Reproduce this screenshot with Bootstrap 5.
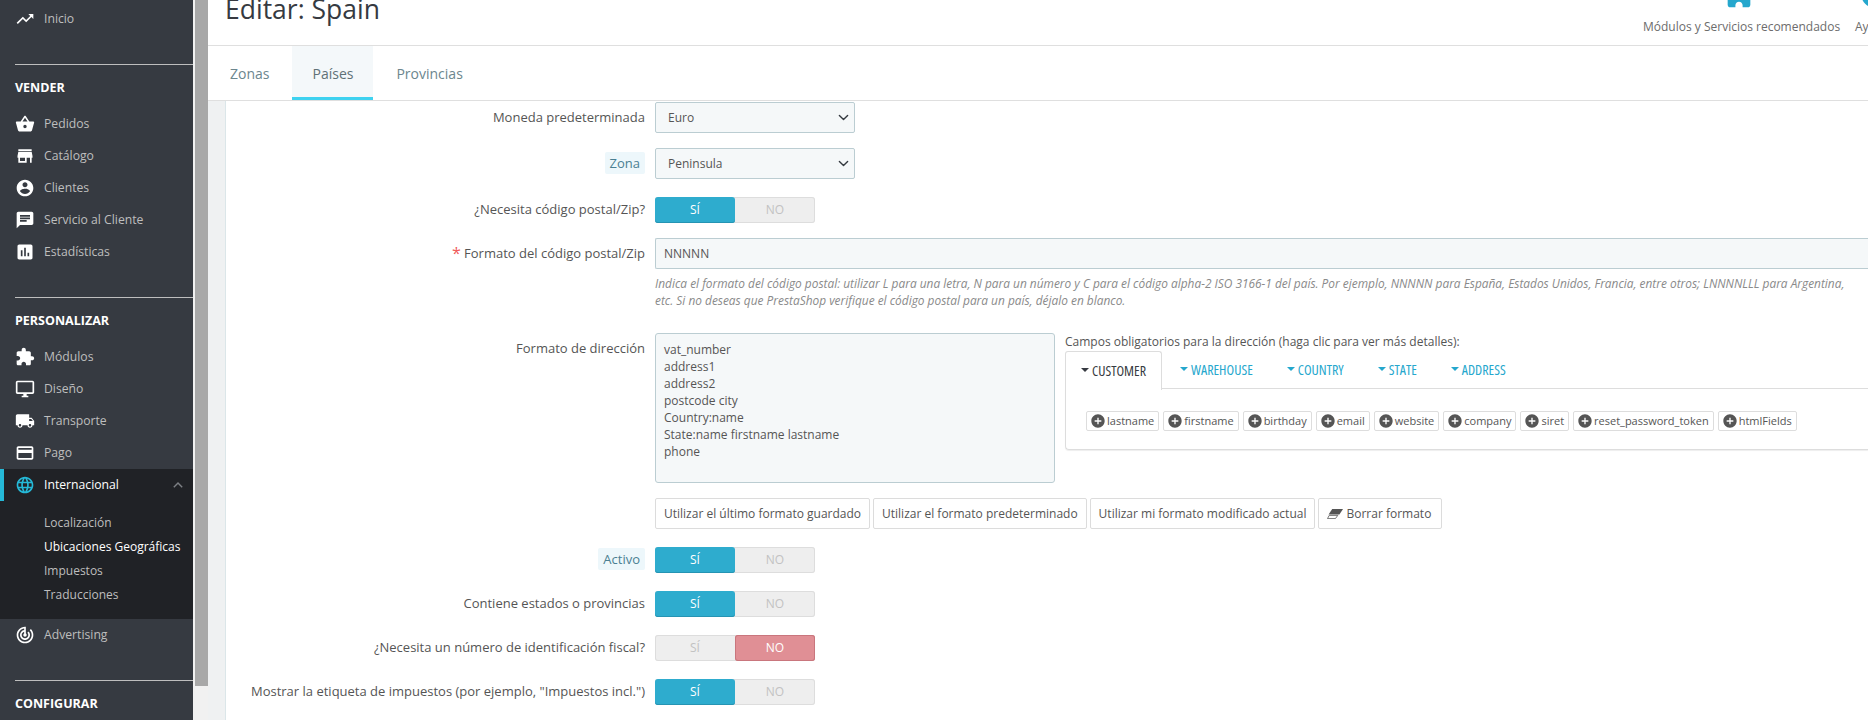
<!DOCTYPE html>
<html lang="es">
<head>
  <meta charset="UTF-8">
  <title>Editar: Spain</title>
  <link href="https://cdn.jsdelivr.net/npm/bootstrap@5.3.3/dist/css/bootstrap.min.css" rel="stylesheet">
  <style>
    html, body { height: 720px; overflow: hidden; }
    body { font-family: "Open Sans", sans-serif; font-size: 13px; color: #6c868e; background: #fff; display: flex; }

    /* sidebar */
    .menu-lateral { width: 193px; height: 720px; flex: none; background: #363a41; overflow: hidden; color: #bebebe; }
    .menu-item { height: 32px; display: flex; align-items: center; padding-left: 15px; color: #bebebe; text-decoration: none; font-size: 12.2px; }
    .menu-item svg { width: 20px; height: 20px; fill: #fff; flex: none; margin-right: 9px; }
    .menu-titulo { color: #fff; font-weight: 700; font-size: 12.5px; line-height: 17px; padding-left: 15px; margin-bottom: 12px; }
    .menu-sep { height: 1px; background: #bebebe; margin: 0 0 14px 15px; opacity: 1; }
    .menu-activo { background: #202226; height: 150px; }
    .menu-activo .menu-item { color: #fff; position: relative; }
    .menu-activo .menu-item::before { content: ""; position: absolute; left: 0; top: 0; bottom: 0; width: 4px; background: #25b9d7; }
    .menu-activo .menu-item svg { fill: #25b9d7; }
    .menu-activo .menu-item svg.menu-chevron { position: absolute; right: 10px; top: 13px; width: 10px; height: 6px; margin: 0; fill: none; }
    .sub-item { display: block; color: #bebebe; text-decoration: none; padding-left: 44px; line-height: 24px; font-size: 12px; white-space: nowrap; }
    .sub-item.sub-actual { color: #fff; }

    /* scrollbar */
    .barra-scroll { width: 15px; height: 720px; flex: none; padding-left: 2px; background: #f1f1f1; }
    .barra-pulgar { height: 686px; background: #a8a8a8; }

    /* header */
    .zona-central { flex: 1; min-width: 0; display: flex; flex-direction: column; height: 720px; }
    .cabecera { height: 46px; flex: none; border-bottom: 1px solid #dfdfdf; display: flex; justify-content: space-between; overflow: hidden; background: #fff; }
    .titulo-pagina { font-family: "Open Sans", sans-serif; font-weight: 400; font-size: 26.5px; line-height: 30px; color: #363a41; margin: -6px 0 0 17px; }
    .cab-acciones { font-size: 12px; color: #6c6c6c; flex: none; width: 226px; position: relative; }
    .cab-enlace { position: absolute; top: 18px; line-height: 17px; white-space: nowrap; }
    .cab-icono { position: absolute; fill: #25a7cd; }
    .pestanas { height: 55px; flex: none; border-bottom: 1px solid #dfdfdf; background: #fff; padding-left: 2px; gap: 3px; }
    .pestana { height: 54px; padding: 0 20px; display: flex; align-items: center; font-size: 14px; color: #6c868e; text-decoration: none; }
    .pestana-activa { background: #f4f8fa; color: #5f7177; box-shadow: inset 0 -3px 0 #3ed2f0; }

    /* form */
    .fondo-form { flex: 1; min-height: 0; background: #eff1f2; padding-left: 17px; overflow: hidden; }
    .panel-form { height: 100%; background: #fff; border-left: 1px solid #dbe6e9; padding-top: 1px; }
    .fila-form { display: flex; margin-bottom: 15px; }
    .fila-toggle { margin-bottom: 18px; }
    .etiqueta-col { width: 429px; flex: none; padding-right: 10px; text-align: right; font-size: 13px; color: #555; padding-top: 7px; line-height: 17px; white-space: nowrap; }
    .fila-toggle .etiqueta-col { padding-top: 4px; }
    .etiqueta-tip { background: #edf7fb; color: #4a7f92; padding: 2px 5px; border-radius: 2px; }
    .asterisco { color: #f05a5a; font-size: 16px; line-height: 1; vertical-align: -1px; }
    .control-col { flex: 1; min-width: 0; }
    .campo-sel, .campo-txt { height: 31px; border: 1px solid #bbcdd2; border-radius: 2px; background-color: #f5f8f9; color: #555; font-size: 12px; box-shadow: none; }
    .campo-sel { width: 200px; padding: 0 24px 0 12px; background-position: right 4px center; background-size: 13px 11px; }
    .campo-txt { width: 100%; padding: 0 8px; border-right: 0; border-radius: 2px 0 0 2px; }
    .ayuda-form { font-size: 11.9px; line-height: 17px; font-style: italic; color: #8a8a8a; margin: 6px 0 0; max-width: 1205px; }

    .interruptor { width: 160px; height: 26px; display: flex; border-radius: 3px; background: #eee; box-shadow: inset 0 0 0 1px #ddd; font-size: 12px; text-align: center; line-height: 25px; color: #c2c2c2; }
    .interruptor span { width: 80px; border-radius: 3px; }
    .int-si { background: #2eacce; color: #fff; box-shadow: inset 0 -1px 0 #2694b3; }
    .int-no { background: #e08f95; color: #fff; box-shadow: inset 0 0 0 1px #c9767d; }

    .dir-bloque { display: flex; gap: 10px; }
    .dir-texto { width: 400px; height: 150px; flex: none; border: 1px solid #bbcdd2; border-radius: 3px; background: #f5f8f9; padding: 7px 8px; font-size: 12px; line-height: 17px; color: #555; white-space: pre-line; }
    .dir-derecha { flex: 1; min-width: 0; }
    .dir-aviso { font-size: 12px; line-height: 17px; color: #555; margin-bottom: 1px; }
    .tabs-dir { display: flex; gap: 2px; height: 38px; border-bottom: 1px solid #ddd; margin: 0; padding: 0; list-style: none; }
    .tabs-dir a { display: flex; align-items: center; gap: 3px; height: 38px; padding: 0 16px 2px; color: #25a7cd; text-decoration: none; font-size: 14px; font-stretch: condensed; }
    .tabs-dir .tab-abierta a { color: #363a41; background: #fff; border: 1px solid #ddd; border-bottom: 0; border-radius: 3px 3px 0 0; height: 39px; padding: 0 15px 2px; }
    .flechita { width: 0; height: 0; border-left: 4px solid transparent; border-right: 4px solid transparent; border-top: 4px solid currentColor; }
    .panel-chips { height: 61px; border: 1px solid #ddd; border-top: 0; border-right: 0; border-radius: 0 0 0 4px; padding: 22px 0 0 20px; display: flex; gap: 4px; align-items: flex-start; box-shadow: 0 1px 1px #eee; }
    .chip { height: 20px; display: flex; align-items: center; gap: 1px; padding: 0 4px 0 3px; border: 1px solid #ddd; border-radius: 2px; font-size: 11px; color: #555; white-space: nowrap; background: #fff; }
    .chip svg { width: 16px; height: 16px; fill: #555; flex: none; }

    .botones-fmt { display: flex; gap: 3px; margin-top: 15px; }
    .boton-fmt { height: 31px; padding: 0 8px; border: 1px solid #dcdcdc; border-radius: 2px; background: #fff; font-size: 12px; color: #555; display: flex; align-items: center; gap: 3px; white-space: nowrap; }
    .boton-fmt svg { width: 16px; height: 10px; }
    .boton-borrar { padding-right: 10px; }
  </style>
</head>
<body>
  <nav class="menu-lateral">
    <div style="height:3px"></div>
    <a class="menu-item" href="#"><svg viewBox="0 0 24 24"><path d="M16 6l2.29 2.29-4.88 4.88-4-4L2 16.59 3.41 18l6-6 4 4 6.3-6.29L22 12V6z"/></svg>Inicio</a>
    <div style="height:29px"></div>
    <hr class="menu-sep">
    <div class="menu-titulo">VENDER</div>
    <a class="menu-item" href="#"><svg viewBox="0 0 24 24"><path d="M17.21 9l-4.38-6.56c-.19-.28-.51-.42-.83-.42-.32 0-.64.14-.83.43L6.79 9H2c-.55 0-1 .45-1 1 0 .09.01.18.04.27l2.54 9.27c.23.84 1 1.46 1.92 1.46h13c.92 0 1.69-.62 1.93-1.46l2.54-9.27L23 10c0-.55-.45-1-1-1h-4.79zM9 9l3-4.4L15 9H9zm3 8c-1.1 0-2-.9-2-2s.9-2 2-2 2 .9 2 2-.9 2-2 2z"/></svg>Pedidos</a>
    <a class="menu-item" href="#"><svg viewBox="0 0 24 24"><path d="M20 4H4v2h16V4zm1 10v-2l-1-5H4l-1 5v2h1v6h10v-6h4v6h2v-6h1zm-9 4H6v-4h6v4z"/></svg>Catálogo</a>
    <a class="menu-item" href="#"><svg viewBox="0 0 24 24"><path d="M12 2C6.48 2 2 6.48 2 12s4.48 10 10 10 10-4.48 10-10S17.52 2 12 2zm0 3c1.66 0 3 1.34 3 3s-1.34 3-3 3-3-1.34-3-3 1.34-3 3-3zm0 14.2c-2.5 0-4.71-1.28-6-3.22.03-1.99 4-3.08 6-3.08 1.99 0 5.97 1.09 6 3.08-1.29 1.94-3.5 3.22-6 3.22z"/></svg>Clientes</a>
    <a class="menu-item" href="#"><svg viewBox="0 0 24 24"><path d="M20 2H4c-1.1 0-1.99.9-1.99 2L2 22l4-4h14c1.1 0 2-.9 2-2V4c0-1.1-.9-2-2-2zM6 9h12v2H6V9zm8 5H6v-2h8v2zm4-6H6V6h12v2z"/></svg>Servicio al Cliente</a>
    <a class="menu-item" href="#"><svg viewBox="0 0 24 24"><path d="M19 3H5c-1.1 0-2 .9-2 2v14c0 1.1.9 2 2 2h14c1.1 0 2-.9 2-2V5c0-1.1-.9-2-2-2zM9 17H7v-7h2v7zm4 0h-2V7h2v10zm4 0h-2v-4h2v4z"/></svg>Estadísticas</a>
    <div style="height:29px"></div>
    <hr class="menu-sep">
    <div class="menu-titulo">PERSONALIZAR</div>
    <a class="menu-item" href="#"><svg viewBox="0 0 24 24"><path d="M20.5 11H19V7c0-1.1-.9-2-2-2h-4V3.5C13 2.12 11.88 1 10.5 1S8 2.12 8 3.5V5H4c-1.1 0-1.99.9-1.99 2v3.8H3.5c1.49 0 2.7 1.21 2.7 2.7s-1.21 2.7-2.7 2.7H2V20c0 1.1.9 2 2 2h3.8v-1.5c0-1.49 1.21-2.7 2.7-2.7 1.49 0 2.7 1.21 2.7 2.7V22H17c1.1 0 2-.9 2-2v-4h1.5c1.38 0 2.5-1.12 2.5-2.5S21.88 11 20.5 11z"/></svg>Módulos</a>
    <a class="menu-item" href="#"><svg viewBox="0 0 24 24"><path d="M21 2H3c-1.1 0-2 .9-2 2v12c0 1.1.9 2 2 2h7v2H8v2h8v-2h-2v-2h7c1.1 0 2-.9 2-2V4c0-1.1-.9-2-2-2zm0 14H3V4h18v12z"/></svg>Diseño</a>
    <a class="menu-item" href="#"><svg viewBox="0 0 24 24"><path d="M20 8h-3V4H3c-1.1 0-2 .9-2 2v11h2c0 1.66 1.34 3 3 3s3-1.34 3-3h6c0 1.66 1.34 3 3 3s3-1.34 3-3h2v-5l-3-4zM6 18.5c-.83 0-1.5-.67-1.5-1.5s.67-1.5 1.5-1.5 1.5.67 1.5 1.5-.67 1.5-1.5 1.5zm13.5-9l1.96 2.5H17V9.5h2.5zm-1.5 9c-.83 0-1.5-.67-1.5-1.5s.67-1.5 1.5-1.5 1.5.67 1.5 1.5-.67 1.5-1.5 1.5z"/></svg>Transporte</a>
    <a class="menu-item" href="#"><svg viewBox="0 0 24 24"><path d="M20 4H4c-1.11 0-1.99.89-1.99 2L2 18c0 1.11.89 2 2 2h16c1.11 0 2-.89 2-2V6c0-1.11-.89-2-2-2zm0 14H4v-6h16v6zm0-10H4V6h16v2z"/></svg>Pago</a>
    <div class="menu-activo">
      <a class="menu-item" href="#"><svg viewBox="0 0 24 24"><path d="M11.99 2C6.47 2 2 6.48 2 12s4.47 10 9.99 10C17.52 22 22 17.52 22 12S17.52 2 11.99 2zm6.93 6h-2.95c-.32-1.25-.78-2.45-1.38-3.56 1.84.63 3.37 1.91 4.33 3.56zM12 4.04c.83 1.2 1.48 2.53 1.91 3.96h-3.82c.43-1.43 1.08-2.76 1.91-3.96zM4.26 14C4.1 13.36 4 12.69 4 12s.1-1.36.26-2h3.38c-.08.66-.14 1.32-.14 2 0 .68.06 1.34.14 2H4.26zm.82 2h2.95c.32 1.25.78 2.45 1.38 3.56-1.84-.63-3.37-1.9-4.33-3.56zm2.95-8H5.08c.96-1.66 2.49-2.93 4.33-3.56C8.81 5.55 8.35 6.75 8.03 8zM12 19.96c-.83-1.2-1.48-2.53-1.91-3.96h3.82c-.43 1.43-1.08 2.76-1.91 3.96zM14.34 14H9.66c-.09-.66-.16-1.32-.16-2 0-.68.07-1.35.16-2h4.68c.09.65.16 1.32.16 2 0 .68-.07 1.34-.16 2zm.25 5.56c.6-1.11 1.06-2.31 1.38-3.56h2.95c-.96 1.65-2.49 2.93-4.33 3.56zM16.36 14c.08-.66.14-1.32.14-2 0-.68-.06-1.34-.14-2h3.38c.16.64.26 1.31.26 2s-.1 1.36-.26 2h-3.38z"/></svg>Internacional
        <svg class="menu-chevron" viewBox="0 0 10 6"><path d="M.8 5.2L5 1l4.2 4.2" stroke="#7d8085" stroke-width="1.4" fill="none"/></svg></a>
      <div style="height:10px"></div>
      <a class="sub-item" href="#">Localización</a>
      <a class="sub-item sub-actual" href="#">Ubicaciones Geográficas</a>
      <a class="sub-item" href="#">Impuestos</a>
      <a class="sub-item" href="#">Traducciones</a>
    </div>
    <a class="menu-item" href="#"><svg viewBox="0 0 24 24"><path d="M19.07 4.93l-1.41 1.41C19.1 7.79 20 9.79 20 12c0 4.42-3.58 8-8 8s-8-3.58-8-8c0-4.08 3.05-7.44 7-7.93v2.02C8.16 6.57 6 9.03 6 12c0 3.31 2.69 6 6 6s6-2.69 6-6c0-1.66-.67-3.16-1.76-4.24l-1.41 1.41C15.55 9.9 16 10.9 16 12c0 2.21-1.79 4-4 4s-4-1.79-4-4c0-1.86 1.28-3.41 3-3.86v2.14c-.6.35-1 .98-1 1.72 0 1.1.9 2 2 2s2-.9 2-2c0-.74-.4-1.38-1-1.72V2h-1C6.48 2 2 6.48 2 12s4.48 10 10 10 10-4.48 10-10c0-2.76-1.12-5.26-2.93-7.07z"/></svg>Advertising</a>
    <div style="height:29px"></div>
    <hr class="menu-sep">
    <div class="menu-titulo">CONFIGURAR</div>
  </nav>

  <div class="barra-scroll"><div class="barra-pulgar"></div></div>

  <div class="zona-central">
    <header class="cabecera">
      <h1 class="titulo-pagina">Editar: Spain</h1>
      <div class="cab-acciones">
        <svg class="cab-icono" style="left:83px;top:-22px;width:32px;height:32px" viewBox="0 0 24 24"><path d="M20.5 11H19V7c0-1.1-.9-2-2-2h-4V3.5C13 2.12 11.88 1 10.5 1S8 2.12 8 3.5V5H4c-1.1 0-1.99.9-1.99 2v3.8H3.5c1.49 0 2.7 1.21 2.7 2.7s-1.21 2.7-2.7 2.7H2V20c0 1.1.9 2 2 2h3.8v-1.5c0-1.49 1.21-2.7 2.7-2.7 1.49 0 2.7 1.21 2.7 2.7V22H17c1.1 0 2-.9 2-2v-4h1.5c1.38 0 2.5-1.12 2.5-2.5S21.88 11 20.5 11z"/></svg>
        <span class="cab-enlace" style="left:1px">Módulos y Servicios recomendados</span>
        <svg class="cab-icono" style="left:217px;top:-20px;width:30px;height:30px" viewBox="0 0 24 24"><circle cx="12" cy="12" r="10"/></svg>
        <span class="cab-enlace" style="left:213px">Ayuda</span>
      </div>
    </header>
    <ul class="pestanas nav">
      <li class="nav-item"><a class="pestana" href="#">Zonas</a></li>
      <li class="nav-item"><a class="pestana pestana-activa" href="#">Países</a></li>
      <li class="nav-item"><a class="pestana" href="#">Provincias</a></li>
    </ul>
    <div class="fondo-form">
      <form class="panel-form">
        <div class="fila-form">
          <div class="etiqueta-col">Moneda predeterminada</div>
          <div class="control-col"><select class="form-select campo-sel"><option>Euro</option></select></div>
        </div>
        <div class="fila-form fila-toggle">
          <div class="etiqueta-col" style="padding-top:7px"><span class="etiqueta-tip">Zona</span></div>
          <div class="control-col"><select class="form-select campo-sel"><option>Peninsula</option></select></div>
        </div>
        <div class="fila-form">
          <div class="etiqueta-col" style="padding-top:4px">¿Necesita código postal/Zip?</div>
          <div class="control-col"><div class="interruptor"><span class="int-si">SÍ</span><span>NO</span></div></div>
        </div>
        <div class="fila-form">
          <div class="etiqueta-col"><span class="asterisco">*</span> Formato del código postal/Zip</div>
          <div class="control-col">
            <input class="form-control campo-txt" value="NNNNN">
            <p class="ayuda-form">Indica el formato del código postal: utilizar L para una letra, N para un número y C para el código alpha-2 ISO 3166-1 del país. Por ejemplo, NNNNN para España, Estados Unidos, Francia, entre otros; LNNNNLLL para Argentina, etc. Si no deseas que PrestaShop verifique el código postal para un país, déjalo en blanco.</p>
          </div>
        </div>
        <div class="fila-form" style="margin-top:24px;margin-bottom:18px">
          <div class="etiqueta-col">Formato de dirección</div>
          <div class="control-col">
            <div class="dir-bloque">
              <div class="dir-texto">vat_number
address1
address2
postcode city
Country:name
State:name firstname lastname
phone</div>
              <div class="dir-derecha">
                <div class="dir-aviso">Campos obligatorios para la dirección (haga clic para ver más detalles):</div>
                <ul class="tabs-dir">
                  <li class="tab-abierta"><a href="#"><i class="flechita"></i>CUSTOMER</a></li>
                  <li><a href="#"><i class="flechita"></i>WAREHOUSE</a></li>
                  <li><a href="#"><i class="flechita"></i>COUNTRY</a></li>
                  <li><a href="#"><i class="flechita"></i>STATE</a></li>
                  <li><a href="#"><i class="flechita"></i>ADDRESS</a></li>
                </ul>
                <div class="panel-chips">
                  <span class="chip"><svg viewBox="0 0 24 24"><path d="M12 2C6.48 2 2 6.48 2 12s4.48 10 10 10 10-4.48 10-10S17.52 2 12 2zm5 11h-4v4h-2v-4H7v-2h4V7h2v4h4v2z"/></svg>lastname</span>
                  <span class="chip"><svg viewBox="0 0 24 24"><path d="M12 2C6.48 2 2 6.48 2 12s4.48 10 10 10 10-4.48 10-10S17.52 2 12 2zm5 11h-4v4h-2v-4H7v-2h4V7h2v4h4v2z"/></svg>firstname</span>
                  <span class="chip"><svg viewBox="0 0 24 24"><path d="M12 2C6.48 2 2 6.48 2 12s4.48 10 10 10 10-4.48 10-10S17.52 2 12 2zm5 11h-4v4h-2v-4H7v-2h4V7h2v4h4v2z"/></svg>birthday</span>
                  <span class="chip"><svg viewBox="0 0 24 24"><path d="M12 2C6.48 2 2 6.48 2 12s4.48 10 10 10 10-4.48 10-10S17.52 2 12 2zm5 11h-4v4h-2v-4H7v-2h4V7h2v4h4v2z"/></svg>email</span>
                  <span class="chip"><svg viewBox="0 0 24 24"><path d="M12 2C6.48 2 2 6.48 2 12s4.48 10 10 10 10-4.48 10-10S17.52 2 12 2zm5 11h-4v4h-2v-4H7v-2h4V7h2v4h4v2z"/></svg>website</span>
                  <span class="chip"><svg viewBox="0 0 24 24"><path d="M12 2C6.48 2 2 6.48 2 12s4.48 10 10 10 10-4.48 10-10S17.52 2 12 2zm5 11h-4v4h-2v-4H7v-2h4V7h2v4h4v2z"/></svg>company</span>
                  <span class="chip"><svg viewBox="0 0 24 24"><path d="M12 2C6.48 2 2 6.48 2 12s4.48 10 10 10 10-4.48 10-10S17.52 2 12 2zm5 11h-4v4h-2v-4H7v-2h4V7h2v4h4v2z"/></svg>siret</span>
                  <span class="chip"><svg viewBox="0 0 24 24"><path d="M12 2C6.48 2 2 6.48 2 12s4.48 10 10 10 10-4.48 10-10S17.52 2 12 2zm5 11h-4v4h-2v-4H7v-2h4V7h2v4h4v2z"/></svg>reset_password_token</span>
                  <span class="chip"><svg viewBox="0 0 24 24"><path d="M12 2C6.48 2 2 6.48 2 12s4.48 10 10 10 10-4.48 10-10S17.52 2 12 2zm5 11h-4v4h-2v-4H7v-2h4V7h2v4h4v2z"/></svg>htmlFields</span>
                </div>
              </div>
            </div>
            <div class="botones-fmt">
              <button type="button" class="boton-fmt">Utilizar el último formato guardado</button>
              <button type="button" class="boton-fmt">Utilizar el formato predeterminado</button>
              <button type="button" class="boton-fmt">Utilizar mi formato modificado actual</button>
              <button type="button" class="boton-fmt boton-borrar"><svg viewBox="0 0 16 10"><path d="M5.2 0H16l-3.6 5.6H1.6z" fill="#555"/><path d="M2.2 6.4h8.6L8.4 9.6H.5z" fill="#fff" stroke="#555" stroke-width=".8"/></svg>Borrar formato</button>
            </div>
          </div>
        </div>
        <div class="fila-form fila-toggle">
          <div class="etiqueta-col"><span class="etiqueta-tip">Activo</span></div>
          <div class="control-col"><div class="interruptor"><span class="int-si">SÍ</span><span>NO</span></div></div>
        </div>
        <div class="fila-form fila-toggle">
          <div class="etiqueta-col">Contiene estados o provincias</div>
          <div class="control-col"><div class="interruptor"><span class="int-si">SÍ</span><span>NO</span></div></div>
        </div>
        <div class="fila-form fila-toggle">
          <div class="etiqueta-col">¿Necesita un número de identificación fiscal?</div>
          <div class="control-col"><div class="interruptor"><span>SÍ</span><span class="int-no">NO</span></div></div>
        </div>
        <div class="fila-form fila-toggle">
          <div class="etiqueta-col">Mostrar la etiqueta de impuestos (por ejemplo, "Impuestos incl.")</div>
          <div class="control-col"><div class="interruptor"><span class="int-si">SÍ</span><span>NO</span></div></div>
        </div>
      </form>
    </div>
  </div>
  <script src="https://cdn.jsdelivr.net/npm/bootstrap@5.3.3/dist/js/bootstrap.bundle.min.js"></script>
</body>
</html>
